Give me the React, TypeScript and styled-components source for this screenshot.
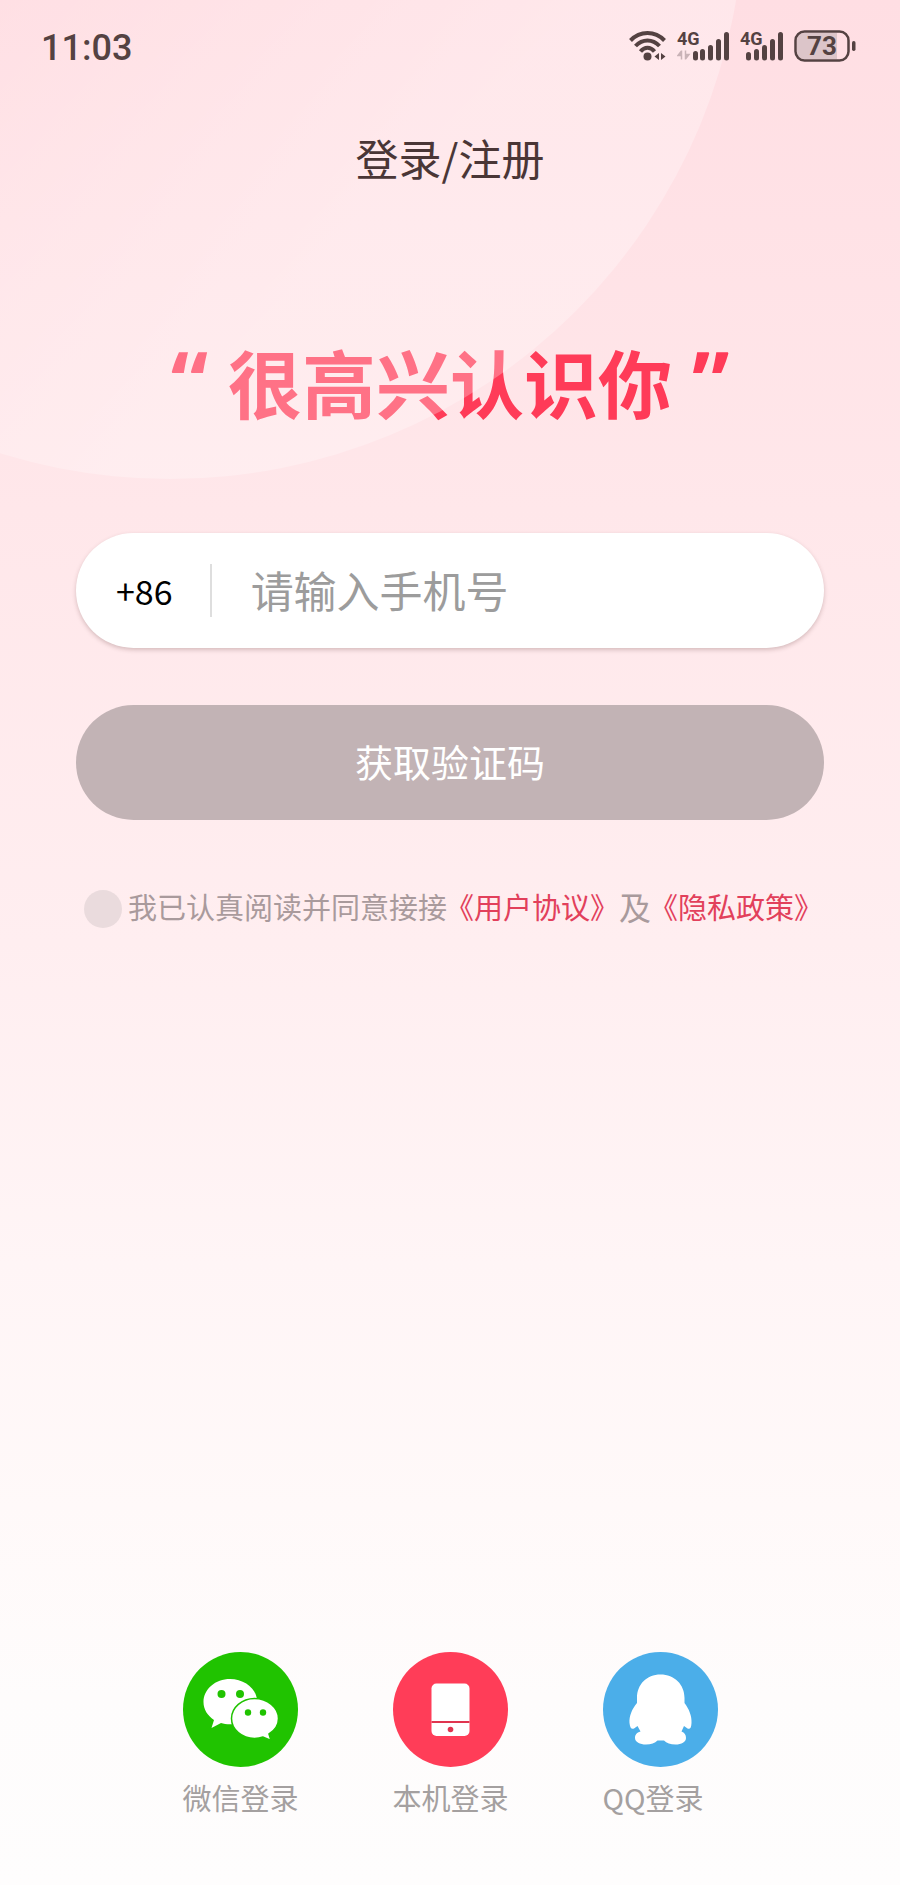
import React, { useState } from "react";
import styled, { createGlobalStyle } from "styled-components";

const GlobalStyle = createGlobalStyle`
  * { box-sizing: border-box; }
  body {
    margin: 0;
    font-family: "Noto Sans CJK SC", "Noto Sans", sans-serif;
  }
`;

const ink = "#544242";
const brand = "#ff3b58";
const muted = "#a99a9c";

const Page = styled.main`
  position: relative;
  display: flex;
  flex-direction: column;
  min-height: 100vh;
  overflow: hidden;
  background: linear-gradient(
    180deg,
    #ffdee3 0%,
    #ffe7ea 27%,
    #ffeef0 50%,
    #fff5f6 67%,
    #fff9f9 80%,
    #fefcfc 90%,
    #fefdfd 100%
  );
`;

const Glow = styled.div`
  position: absolute;
  left: -404px;
  top: -669px;
  width: 1148px;
  height: 1148px;
  border-radius: 50%;
  background: linear-gradient(135deg, rgba(255, 255, 255, 0) 42%, rgba(255, 255, 255, 0.28) 72%);
  pointer-events: none;
`;

const Header = styled.header`
  position: relative;
  z-index: 1;
`;

const StatusBar = styled.div`
  display: flex;
  align-items: center;
  justify-content: space-between;
  height: 92px;
  padding: 0 44px 0 41px;
`;

const Clock = styled.time`
  padding-top: 3px;
  font: 500 36px/44px Roboto, sans-serif;
  color: ${ink};
`;

const StatusIcons = styled.div`
  display: flex;
  align-items: center;
  gap: 11px;
`;

const Title = styled.h1`
  margin: 34px 0 0;
  font-size: 43px;
  line-height: 62px;
  font-weight: 400;
  text-align: center;
  color: #4a3636;
`;

const Slogan = styled.p`
  display: flex;
  justify-content: center;
  gap: 20px;
  margin: 145px 0 0;
  font-size: 74px;
  line-height: 96px;
  font-weight: 700;
  color: ${brand};
`;

const Quote = styled.span`
  font-family: "Open Sans", "Noto Sans", sans-serif;
  font-size: 84px;
`;

const Form = styled.form`
  display: flex;
  flex-direction: column;
  margin: 104px 76px 0;
`;

const PhoneField = styled.div`
  display: flex;
  align-items: center;
  height: 115px;
  padding: 0 40px;
  border-radius: 58px;
  background: #fff;
  box-shadow: 0 2px 4px rgba(90, 50, 50, 0.25);
`;

const DialCode = styled.label`
  font-size: 34px;
  line-height: 48px;
  color: #000;
`;

const Divider = styled.span`
  width: 2px;
  height: 53px;
  margin: 0 39px 0 37px;
  background: #dedede;
`;

const PhoneInput = styled.input`
  flex: 1;
  min-width: 0;
  height: 72px;
  padding: 0 0 4px;
  border: 0;
  outline: 0;
  background: transparent;
  font: inherit;
  font-size: 43px;
  color: #222;
  &::placeholder {
    color: #9c9c9c;
    opacity: 1;
  }
`;

const SubmitButton = styled.button`
  height: 115px;
  margin-top: 57px;
  padding: 0 0 4px;
  border: 0;
  border-radius: 58px;
  background: #c2b3b5;
  font: inherit;
  font-size: 38px;
  color: #fff;
`;

const Agreement = styled.div`
  display: flex;
  align-items: center;
  height: 40px;
  margin: 66px 0 0 8px;
  font-size: 29px;
  line-height: 40px;
  white-space: nowrap;
  color: ${muted};
`;

const AgreeBox = styled.input`
  appearance: none;
  flex: none;
  width: 38px;
  height: 38px;
  margin: 6px 6px 0 0;
  border-radius: 50%;
  background: #eadbdd;
  &:checked {
    background: ${brand};
  }
`;

const Conjunction = styled.span`
  font-size: 32px;
`;

const PolicyLink = styled.a`
  margin-left: -2px;
  color: #e2405b;
  text-decoration: none;
`;

const SocialRow = styled.nav`
  display: flex;
  justify-content: center;
  gap: 95px;
  margin-top: auto;
  padding: 60px 0 68px;
`;

const SocialButton = styled.button`
  display: flex;
  flex-direction: column;
  align-items: flex-start;
  gap: 10px;
  width: 115px;
  padding: 0;
  border: 0;
  background: none;
  font: inherit;
  font-size: 29px;
  line-height: 40px;
  white-space: nowrap;
  color: #a4a0a0;
`;

const Badge = styled.span<{ $color: string }>`
  display: block;
  width: 115px;
  height: 115px;
  border-radius: 50%;
  background: ${(p) => p.$color};
  svg {
    display: block;
  }
`;

const WifiIcon = () => (
  <svg width="37" height="32" viewBox="0 0 37 32" fill="none" stroke={ink} strokeWidth="4" aria-hidden="true">
    <path d="M1.5 10.5C11 0.5 26 0.5 35.5 10.5" />
    <path d="M6.5 16C13.500 8.500 23.500 8.500 30.500 16" />
    <path d="M11.500 21.500C15.500 16.500 21.500 16.500 25.500 21.500" />
    <circle cx="18.500" cy="26.500" r="4" fill={ink} stroke="none" />
    <path d="M30 23v7l-4.500-3.500zM32 23v7l4.500-3.500z" fill={ink} stroke="none" />
  </svg>
);

const SignalIcon = ({ bars, width, traffic }: { bars: number[][]; width: number; traffic?: boolean }) => (
  <svg width={width} height="44" viewBox={`0 -6 ${width} 44`} aria-hidden="true">
    <text x="0" y="15" fontFamily="Roboto, sans-serif" fontWeight="700" fontSize="18" fill={ink}>
      4G
    </text>
    {traffic && (
      <path d="M4.500 20.500v9M4.500 21L1 25.500h3.500M8.500 20.500v9M8.500 29L12 24.500H8.500" fill="#c9b3b7" stroke="#c9b3b7" strokeWidth="1.500" />
    )}
    {bars.map(([x, top]) => (
      <rect key={x} x={x} y={top} width="5" height={30.5 - top} rx="2.500" fill={ink} />
    ))}
  </svg>
);

const BatteryIcon = () => (
  <svg width="62" height="32" viewBox="0 0 62 32" aria-hidden="true">
    <path d="M10 3H43V29H10C5 29 3 26 3 22V10C3 6 5 3 10 3Z" fill="#dcc5c9" />
    <rect x="1.500" y="1.500" width="53" height="29" rx="9" fill="none" stroke={ink} strokeWidth="2.500" />
    <rect x="58" y="11" width="3.500" height="10" rx="1.700" fill={ink} />
    <text x="28" y="25" textAnchor="middle" fontFamily="Roboto, sans-serif" fontWeight="700" fontSize="26" fill={ink}>
      73
    </text>
  </svg>
);

const WechatIcon = () => (
  <svg width="115" height="115" viewBox="0 0 115 115" aria-hidden="true">
    <path
      d="M47 27C32.500 27 20.500 37 20.500 50C20.500 57.500 24.500 63.500 31 68L28.500 76L38 71C41 72 44.500 72.500 49 72.300C60 72 74 62 74 48C73 36 61 27 47 27Z"
      fill="#fff"
    />
    <path
      d="M71.500 46.500C59 46.500 48.500 55.500 48.500 66.500C48.500 77.500 59 86.500 71.500 86.500C74.500 86.500 77.500 86 80 85L88 88.500L86 82C91.500 78.500 95.500 73 95.500 66.500C95.500 55.500 84.500 46.500 71.500 46.500Z"
      fill="#fff"
      stroke="#20c300"
      strokeWidth="1.500"
    />
    <g fill="#20c300">
      <circle cx="38.500" cy="42" r="4" />
      <circle cx="57" cy="42" r="4" />
      <circle cx="65" cy="60.500" r="3.200" />
      <circle cx="80" cy="60.500" r="3.200" />
    </g>
  </svg>
);

const PhoneIcon = () => (
  <svg width="115" height="115" viewBox="0 0 115 115" aria-hidden="true">
    <rect x="38.500" y="31.500" width="38" height="52.500" rx="5" fill="#fff" />
    <path d="M38.500 70H76.500" stroke="#e0354f" strokeWidth="2" />
    <circle cx="57.500" cy="77.500" r="2.800" fill="#e0354f" />
  </svg>
);

const QQIcon = () => (
  <svg width="115" height="115" viewBox="0 0 115 115" aria-hidden="true">
    <path
      d="M57.500 22.500C43.500 22.500 34 32.500 34 46L34 51C29 57 26 64 26.500 71C27 76 28.500 77.500 31 76.500L34.500 74L37.500 79.500C33.500 80.500 32 83 32 86C32 90 37 92.500 43 92.500C48 92.500 52 91 54.500 88.500H61C63.500 91 67.500 92.500 72.500 92.500C78.500 92.500 83 90 83 86C83 83 81.500 80.500 78.500 79.500L81 74L84.500 76.500C87 77.500 88.300 76 88.500 71C89 64 86 57 81.500 51V46C81.500 32.500 71.500 22.500 57.500 22.500Z"
      fill="#fff"
    />
  </svg>
);

const providers = [
  { name: "微信登录", color: "#20c300", Icon: WechatIcon },
  { name: "本机登录", color: "#ff3d58", Icon: PhoneIcon },
  { name: "QQ登录", color: "#4baee9", Icon: QQIcon },
];

export default function App() {
  const [phone, setPhone] = useState("");
  const [agreed, setAgreed] = useState(false);

  return (
    <>
      <GlobalStyle />
      <Page>
        <Header>
          <StatusBar>
            <Clock>11:03</Clock>
            <StatusIcons>
              <WifiIcon />
              <SignalIcon width={52} traffic bars={[[16, 21], [23, 19], [31, 15], [39, 9], [47, 2]]} />
              <SignalIcon width={43} bars={[[6, 22], [14, 19], [22, 15], [30, 9], [38, 2]]} />
              <BatteryIcon />
            </StatusIcons>
          </StatusBar>
          <Title>登录/注册</Title>
        </Header>
        <Slogan>
          <Quote>“</Quote>
          <span>很高兴认识你</span>
          <Quote>”</Quote>
        </Slogan>
        <Glow />
        <Form onSubmit={(e) => e.preventDefault()}>
          <PhoneField>
            <DialCode htmlFor="phone">+86</DialCode>
            <Divider />
            <PhoneInput
              id="phone"
              type="tel"
              placeholder="请输入手机号"
              value={phone}
              onChange={(e) => setPhone(e.target.value)}
            />
          </PhoneField>
          <SubmitButton type="submit">获取验证码</SubmitButton>
          <Agreement>
            <AgreeBox id="agree" type="checkbox" checked={agreed} onChange={(e) => setAgreed(e.target.checked)} />
            <label htmlFor="agree">我已认真阅读并同意接接</label>
            <PolicyLink href="#terms">《用户协议》</PolicyLink>
            <Conjunction>及</Conjunction>
            <PolicyLink href="#privacy">《隐私政策》</PolicyLink>
          </Agreement>
        </Form>
        <SocialRow>
          {providers.map(({ name, color, Icon }) => (
            <SocialButton key={name} type="button">
              <Badge $color={color}>
                <Icon />
              </Badge>
              {name}
            </SocialButton>
          ))}
        </SocialRow>
      </Page>
    </>
  );
}
